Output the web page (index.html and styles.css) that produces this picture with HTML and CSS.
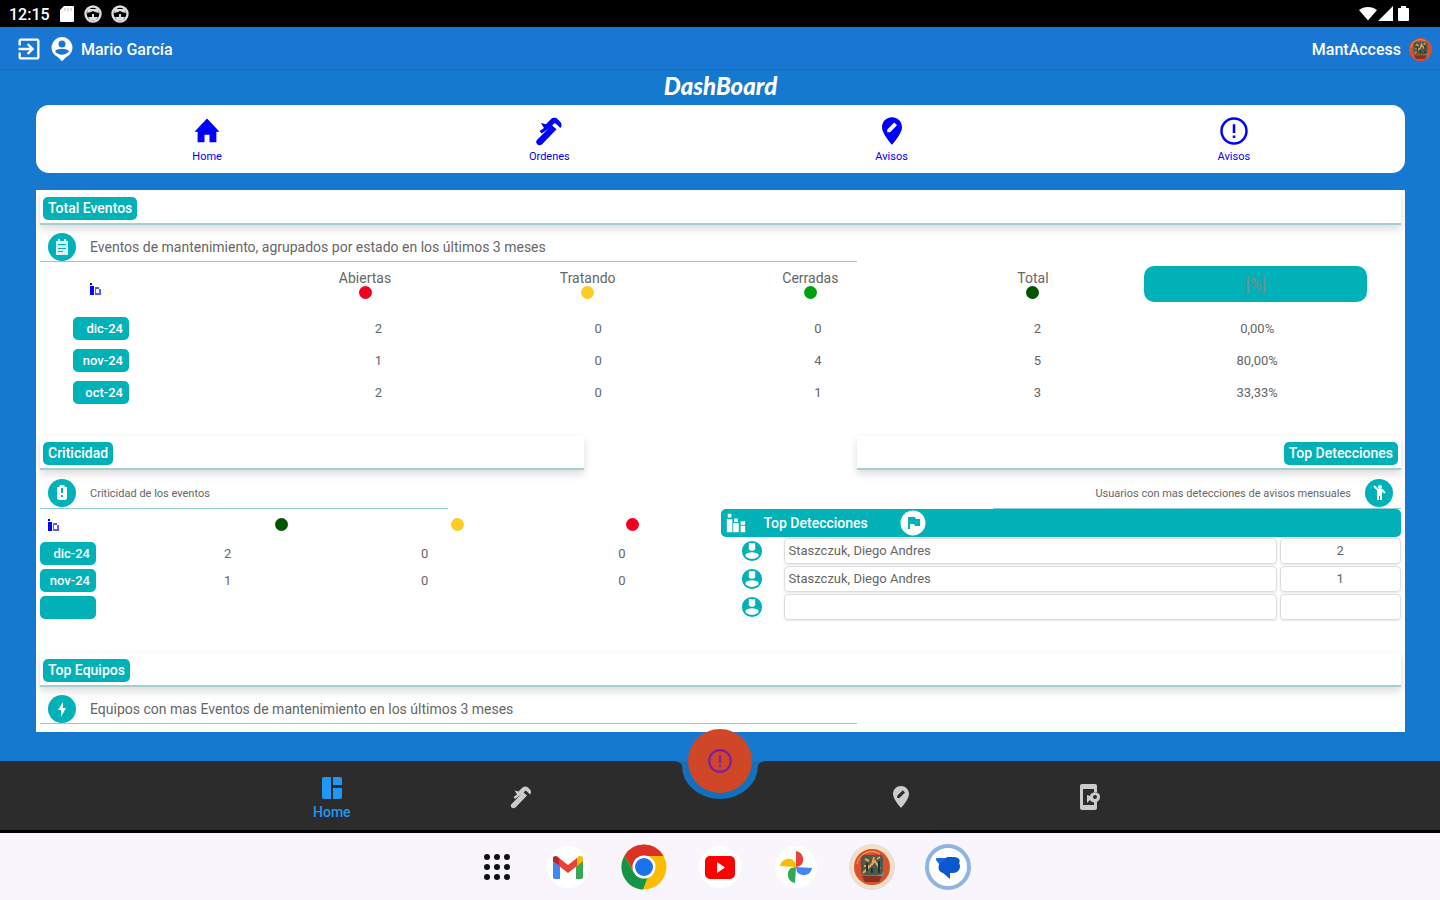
FILE: index.html
```html
<!DOCTYPE html>
<html lang="es">
<head>
<meta charset="utf-8">
<meta name="viewport" content="width=device-width, initial-scale=1">
<title>DashBoard</title>
<link rel="stylesheet" href="styles.css">
</head>
<body>
<svg class="defs" aria-hidden="true">
  <symbol id="tool" viewBox="0 0 24 24"><path d="M2.500 19 12 9.500 9.500 11.500 6 14l-1.500-2L8 9.500 5.500 5.500l4 1L13.500 2.500c1.600-1.500 4-1.500 5.500 0l1.800 1.800c1.500 1.500 1.700 3.800.2 5.200L18.500 7 16.500 5.500 14.500 7.500 18 10.500 6.500 22.500c-1.200 1.100-2.900 1.100-4 0-1-1-1-2.500 0-3.500z"/></symbol>
  <symbol id="pin" viewBox="0 0 24 24"><path fill-rule="evenodd" d="M12 1c-4.400 0-8 3.400-8 8 0 5.300 8 14 8 14s8-8.700 8-14c0-4.600-3.600-8-8-8zM8.200 13v-2.200l5.600-5.600 2.200 2.200-5.600 5.600z"/></symbol>
  <symbol id="alert" viewBox="0 0 24 24"><circle cx="12" cy="12" r="10" fill="none" stroke="currentColor" stroke-width="2"/><path d="M11 6.500h2v7h-2zM11 15.500h2v2h-2z"/></symbol>
  <symbol id="bars" viewBox="0 0 24 24"><path d="M2 8h6v14H2zM3 2h4v4H3zM9 12h6v10H9zM10 7h4v4h-4zM17 15h5v7h-5zM17 10h5v4h-5z"/></symbol>
  <symbol id="mini" viewBox="0 0 14 14"><path d="M1 4h4v9H1zM1 1h2v2H1z"/><path opacity=".65" d="M6 5h4v2H6zM6 7h1v6H6zM7 11h3v2H7zM10 7h2v6h-2z"/></symbol>
  <symbol id="user" viewBox="0 0 24 24"><path fill-rule="evenodd" d="M12 1a11 11 0 1 0 0 22 11 11 0 0 0 0-22zM8.500 3.500h7v6.500c-2 2.200-5 2.200-7 0zM5 18v-2.500c3-3 11-3 14 0V18c-4 3.500-10 3.500-14 0z"/></symbol>
  <symbol id="ball" viewBox="0 0 18 18"><circle cx="9" cy="9" r="7.500" fill="none" stroke="#ddd" stroke-width="2.400"/><path fill="#ddd" d="M4 4h10l1 4-4-1-2-1-2 1-4 1zM8 9h2v3H8zM4 12h10l-2 3H6z"/></symbol>
  <symbol id="logo" viewBox="0 0 36 36"><circle cx="18" cy="18" r="18" fill="#d9512c"/><path fill="#57a6c4" d="M30 24a14 14 0 0 1-6 7l-1-4 4-6z"/><rect x="7" y="6" width="22" height="20" rx="4" fill="#4b5a4b"/><path fill="#8b2f20" d="M8 27h20l-3 6H11z"/><path fill="none" stroke="#e6a35a" stroke-width="2" d="M9 24 21 12l5 8M11 10l4 2M20 8l-2 8M10 17h5M23 10l3-2"/><path fill="none" stroke="#20352f" stroke-width="2" d="M13 14v8M18 19v5M25 12v12"/><path fill="none" stroke="#f1b465" d="M3 15A15 15 0 0 1 26 5"/></symbol>
</svg>

<div class="status">
  <div class="status-side">
    <span>12:15</span>
    <svg width="16" height="18" viewBox="0 0 16 18"><path fill="#fff" d="M5 1h9a1 1 0 0 1 1 1v14a1 1 0 0 1-1 1H2a1 1 0 0 1-1-1V5z"/><path stroke="#bbb" d="M6 3v3M9 3v3M12 3v3"/></svg>
    <svg width="18" height="18"><use href="#ball"/></svg>
    <svg width="18" height="18"><use href="#ball"/></svg>
  </div>
  <svg width="52" height="18" viewBox="0 0 52 18" fill="#fff" aria-hidden="true"><path d="M0 5C5 1 13 1 18 5l-9 10.500zM19 16 34 1v15zM40 3h2V1h5v2h2a1 1 0 0 1 1 1v11a1 1 0 0 1-1 1h-9a1 1 0 0 1-1-1V4a1 1 0 0 1 1-1z"/></svg>
</div>

<header class="appbar">
  <div class="appbar-side">
    <button class="plain" aria-label="Salir"><svg width="28" height="28" viewBox="0 0 24 24"><path d="M10.090 15.590 11.500 17l5-5-5-5-1.410 1.410L12.670 11H3v2h9.670zM19 3H5c-1.110 0-2 .9-2 2v4h2V5h14v14H5v-4H3v4c0 1.100.89 2 2 2h14c1.100 0 2-.9 2-2V5c0-1.100-.9-2-2-2z"/></svg></button>
    <svg width="22" height="26" viewBox="0 0 22 26"><path fill-rule="evenodd" d="M11 1a10.500 10.500 0 0 0-4 20.200l4 4 4-4A10.500 10.500 0 0 0 11 1zm0 3.500a3.500 3.500 0 1 1 0 7 3.500 3.500 0 0 1 0-7zM4 15c3-3 11-3 14 0-3 5-11 5-14 0z"/></svg>
    <span>Mario García</span>
  </div>
  <div class="appbar-side brand"><span>MantAccess</span><svg width="23" height="23"><use href="#logo"/></svg></div>
</header>

<main class="main">
  <h1 class="title">DashBoard</h1>
  <nav class="quick">
    <a href="#"><svg viewBox="0 0 24 24"><path d="M10 21v-6h4v6h5.500v-8.500H22L12 2 2 12.500h2.500V21z"/></svg>Home</a>
    <a href="#"><svg><use href="#tool"/></svg>Ordenes</a>
    <a href="#"><svg><use href="#pin"/></svg>Avisos</a>
    <a href="#"><svg><use href="#alert"/></svg>Avisos</a>
  </nav>

  <div class="panel">
    <section class="block">
      <h2 class="strip"><span class="tag">Total Eventos</span></h2>
      <div class="sub wide">
        <svg class="round" viewBox="0 0 28 28"><circle cx="14" cy="14" r="14"/><path fill="#d8f3f3" d="M8 8h2V6h2v2h4V6h2v2h2v14H8z"/><path stroke="#00b2b8" d="M10 11.500h8M10 15.500h8M10 18.500h5"/></svg>
        <p>Eventos de mantenimiento, agrupados por estado en los últimos 3 meses</p>
      </div>
      <table class="events">
        <thead><tr>
          <th class="lead" aria-label="Mes"><svg class="mini"><use href="#mini"/></svg></th>
          <th>Abiertas<i class="dot red"></i></th>
          <th>Tratando<i class="dot yellow"></i></th>
          <th>Cerradas<i class="dot green"></i></th>
          <th>Total<i class="dot dark"></i></th>
          <th><button class="percent">[%]</button></th>
        </tr></thead>
        <tbody>
          <tr><th><span class="month">dic-24</span></th><td>2</td><td>0</td><td>0</td><td>2</td><td>0,00%</td></tr>
          <tr><th><span class="month">nov-24</span></th><td>1</td><td>0</td><td>4</td><td>5</td><td>80,00%</td></tr>
          <tr><th><span class="month">oct-24</span></th><td>2</td><td>0</td><td>1</td><td>3</td><td>33,33%</td></tr>
        </tbody>
      </table>
    </section>

    <div class="pair">
      <section>
        <h2 class="strip short"><span class="tag">Criticidad</span></h2>
        <div class="sub small">
          <svg class="round" viewBox="0 0 28 28"><circle cx="14" cy="14" r="14"/><path fill="#fff" d="M9 8h2l1-2h4l1 2h2v12l-2 1h-6l-2-1z"/><path stroke="#00b2b8" stroke-width="2" d="M14 9v5M14 16v2"/></svg>
          <p>Criticidad de los eventos</p>
        </div>
        <table class="critical">
          <thead><tr>
            <th class="lead" aria-label="Mes"><svg class="mini"><use href="#mini"/></svg></th>
            <th aria-label="Baja"><i class="dot dark"></i></th>
            <th aria-label="Media"><i class="dot yellow"></i></th>
            <th aria-label="Alta"><i class="dot red"></i></th>
          </tr></thead>
          <tbody>
            <tr><th><span class="month">dic-24</span></th><td>2</td><td>0</td><td>0</td></tr>
            <tr><th><span class="month">nov-24</span></th><td>1</td><td>0</td><td>0</td></tr>
            <tr><th><span class="month"></span></th><td></td><td></td><td></td></tr>
          </tbody>
        </table>
      </section>

      <section>
        <h2 class="strip short right"><span class="tag">Top Detecciones</span></h2>
        <div class="sub small right">
          <p>Usuarios con mas detecciones de avisos mensuales</p>
          <svg class="round" viewBox="0 0 28 28"><circle cx="14" cy="14" r="14"/><path fill="none" stroke="#fff" stroke-width="2" d="m9 7 4 4h4l3 3"/><circle cx="15" cy="8" r="2" fill="#fff"/><path fill="#fff" d="M12 10h5v11h-2v-4h-1v4h-2z"/></svg>
        </div>
        <div class="bar">
          <svg width="24" height="22"><use href="#bars"/></svg>
          <span>Top Detecciones</span>
          <svg width="26" height="26" viewBox="0 0 26 26"><circle cx="13" cy="13" r="12.500"/><path fill="#00b2b8" d="M8 7h7l1 2h4v7h-5l-1-2h-4v5H8z"/></svg>
        </div>
        <ul class="people">
          <li><svg><use href="#user"/></svg><span class="name">Staszczuk, Diego Andres</span><span class="count">2</span></li>
          <li><svg><use href="#user"/></svg><span class="name">Staszczuk, Diego Andres</span><span class="count">1</span></li>
          <li><svg><use href="#user"/></svg><span class="name"></span><span class="count"></span></li>
        </ul>
      </section>
    </div>

    <section class="block">
      <h2 class="strip"><span class="tag">Top Equipos</span></h2>
      <div class="sub wide">
        <svg class="round" viewBox="0 0 28 28"><circle cx="14" cy="14" r="14"/><path fill="#fff" d="m15 7-5 8h3v7l5-9h-3z"/></svg>
        <p>Equipos con mas Eventos de mantenimiento en los últimos 3 meses</p>
      </div>
    </section>
  </div>
</main>

<nav class="tabs">
  <a class="active" href="#"><svg viewBox="0 0 24 24"><path d="M4 1h7v22H4a2 2 0 0 1-2-2V3a2 2 0 0 1 2-2zM13 1h7a2 2 0 0 1 2 2v6h-9zM13 12h9v9a2 2 0 0 1-2 2h-7z"/></svg>Home</a>
  <a href="#" aria-label="Ordenes"><svg><use href="#tool"/></svg></a>
  <span></span>
  <a href="#" aria-label="Avisos"><svg><use href="#pin"/></svg></a>
  <a href="#" aria-label="Dispositivo"><svg class="device" viewBox="0 0 24 28"><path fill-rule="evenodd" d="M4 1h13a2 2 0 0 1 2 2v6h-3V6H5v16h11v-3h3v6a2 2 0 0 1-2 2H4a2 2 0 0 1-2-2V3a2 2 0 0 1 2-2z"/><path fill-rule="evenodd" d="M12 13c1-5 10-5 10 1s-8 7-10 3l-3 3v-8zm5-1a2 2 0 1 0 0 4 2 2 0 0 0 0-4z"/></svg></a>
  <svg class="notch" viewBox="0 0 96 40"><path d="M0 0h96q-9 0-10 5a38 33 0 0 1-76 0Q9 0 0 0z"/></svg>
  <button class="fab" aria-label="Nuevo aviso"><svg><use href="#alert"/></svg></button>
</nav>

<footer class="dock">
  <button class="plain" aria-label="Aplicaciones"><svg viewBox="-5 0 46 46"><g fill="#111"><circle cx="13" cy="13" r="3"/><circle cx="23" cy="13" r="3"/><circle cx="33" cy="13" r="3"/><circle cx="13" cy="23" r="3"/><circle cx="23" cy="23" r="3"/><circle cx="33" cy="23" r="3"/><circle cx="13" cy="33" r="3"/><circle cx="23" cy="33" r="3"/><circle cx="33" cy="33" r="3"/></g></svg></button>
  <button class="plain" aria-label="Gmail"><svg viewBox="0 0 46 46"><circle cx="23" cy="23" r="21" fill="#fff"/><path fill="#4285f4" d="M8 16l7 5v14h-5a2 2 0 0 1-2-2z"/><path fill="#34a853" d="M31 21l7-5v17a2 2 0 0 1-2 2h-5z"/><path fill="#fbbc04" d="M31 15l3-3c2-1 4 0 4 3v2l-7 6z"/><path fill="#c5221f" d="M8 17v-3c0-2 3-3 5-1l2 2v7z"/><path fill="#ea4335" d="m14 14 9 7 9-7v8l-9 7-9-7z"/></svg></button>
  <button class="plain" aria-label="Chrome"><svg viewBox="0 0 46 46"><circle cx="23" cy="23" r="22.500" fill="#fbbc05"/><path fill="#db3226" d="M3.500 11.800A22.500 22.500 0 0 1 42.500 12H23L13 28z"/><path fill="#159447" d="M3.500 11.800 13 29l10 4 4-.5-5 13A22.500 22.500 0 0 1 3.500 11.800z"/><circle cx="23" cy="23" r="11.500" fill="#fff"/><circle cx="23" cy="23" r="9" fill="#1a73e8"/></svg></button>
  <button class="plain" aria-label="YouTube"><svg viewBox="0 0 46 46"><circle cx="23" cy="23" r="21" fill="#fff"/><rect x="8" y="12" width="30" height="23" rx="5" fill="#f00"/><path fill="#fff" d="m20 18 8 5.500-8 5.500z"/></svg></button>
  <button class="plain" aria-label="Fotos"><svg viewBox="0 0 46 46"><circle cx="23" cy="23" r="21" fill="#fff"/><path fill="#ea4335" d="M23 7a8.500 8.500 0 0 1 4 15l-4 1z"/><path fill="#fbbc04" d="M7 22a8.500 8.500 0 0 1 15-4l1 5z"/><path fill="#34a853" d="M22 39a8.500 8.500 0 0 1-4-15l5-1z"/><path fill="#4285f4" d="M39 24a8.500 8.500 0 0 1-15 4l-1-5z"/></svg></button>
  <button class="plain" aria-label="MantAccess"><svg viewBox="0 0 46 46"><circle cx="23" cy="23" r="22.500" fill="#f5dfc5" stroke="#ddd"/><use href="#logo" x="5" y="5" width="36" height="36"/></svg></button>
  <button class="plain" aria-label="Mensajes"><svg viewBox="0 0 46 46"><circle cx="23" cy="23" r="21" fill="#fff" stroke="#8fb4e3" stroke-width="4"/><path fill="#1967e0" d="M12 14h14v13H20c-5 0-7-4-6-7l-3-4c0-1 0-2 1-2z"/><path fill="#0b57d0" d="M22 13h7c5 0 7 4 5 6 3 5-1 10-6 10h-3v6l-7-6c-4-1-6-5-3-9z"/></svg></button>
</footer>
</body>
</html>
```
FILE: styles.css
```css
* { box-sizing: border-box; }
body {
  margin: 0;
  height: 100vh;
  display: flex;
  flex-direction: column;
  font-family: Roboto, "Liberation Sans", sans-serif;
  font-size: 13px;
  color: #666;
  background: #1579cf;
}
svg { display: block; flex: none; fill: currentColor; }
a { color: inherit; text-decoration: none; }
h1, h2, p, ul { margin: 0; padding: 0; }
.defs { position: absolute; width: 0; height: 0; }
.plain { padding: 0; border: 0; background: none; color: inherit; }

.status {
  flex: none;
  height: 27px;
  display: flex;
  align-items: center;
  justify-content: space-between;
  padding: 1px 29px 0 9px;
  background: #000;
  color: #fff;
  font-size: 16px;
  font-weight: 500;
}
.status-side { display: flex; align-items: center; gap: 9px; }

.appbar {
  flex: none;
  height: 42px;
  display: flex;
  align-items: center;
  justify-content: space-between;
  padding: 2px 8px 0 15px;
  background: #1976d2;
  box-shadow: 0 1px 2px #176fae;
  color: #fff;
  font-size: 16px;
  font-weight: 500;
}
.appbar-side { display: flex; align-items: center; gap: 8px; }

.main {
  flex: 1;
  min-height: 0;
  display: flex;
  flex-direction: column;
  padding: 0 35px 29px 36px;
}
.title {
  flex: none;
  height: 36px;
  text-align: center;
  color: #fff;
  font: italic 900 24px/34px Lato, sans-serif;
}
.quick {
  flex: none;
  display: grid;
  grid-template-columns: repeat(4, 1fr);
  height: 68px;
  margin-bottom: 17px;
  border-radius: 13px;
  background: #fff;
  color: #00f;
  font-size: 11px;
}
.quick a {
  display: flex;
  flex-direction: column;
  align-items: center;
  padding-top: 11px;
  gap: 4px;
  line-height: 14px;
}
.quick svg { width: 30px; height: 30px; }
.panel {
  flex: 1;
  min-height: 0;
  overflow: hidden;
  padding: 1px 4px;
  background: #fff;
}

.strip {
  height: 34px;
  display: flex;
  align-items: center;
  padding: 2px 3px 0;
  border-bottom: 2px solid #a3cfd1;
  box-shadow: 0 4px 8px rgba(0, 0, 0, .14);
  font-size: 14px;
}
.strip.short { width: 80%; }
.strip.right { margin-left: auto; justify-content: flex-end; }
.tag {
  height: 23px;
  padding: 0 5px;
  border-radius: 5px;
  background: #00b2b8;
  color: #fff;
  font-weight: 500;
  line-height: 23px;
}
.sub {
  position: relative;
  display: flex;
  align-items: center;
  gap: 14px;
  height: 37px;
  padding: 8px 8px 0;
  border-bottom: 1px solid #8fcdd4;
  font-size: 14px;
}
.sub.wide { width: 60%; }
.sub.small { width: 60%; height: 39px; font-size: 11px; }
.sub.right { margin-left: auto; justify-content: flex-end; white-space: nowrap; }
.round { width: 28px; height: 28px; color: #00b2b8; }

table { display: block; width: 100%; }
thead, tbody { display: block; }
tr { display: grid; align-items: center; }
th, td { display: block; padding: 0; text-align: center; font-weight: 400; }
.mini { width: 14px; height: 14px; color: #00f; }
.dot { display: block; width: 13px; height: 13px; margin: 0 auto; border-radius: 50%; }
.red { background: #f20020; }
.yellow { background: #fecb22; }
.green { background: #00a010; }
.dark { background: #005600; }
.month {
  display: block;
  width: 56px;
  height: 23px;
  padding-right: 6px;
  border-radius: 5px;
  background: #00b2b8;
  color: #fff;
  font-weight: 500;
  line-height: 23px;
  text-align: right;
}

.events { padding-right: 34px; margin-bottom: 28px; }
.events thead tr { height: 50px; grid-template-columns: 214fr repeat(5, 223fr); padding-bottom: 6px; }
.events thead th { line-height: 16px; font-size: 14px; }
.events .lead { padding: 10px 0 0 49px; }
.events tbody tr { height: 32px; grid-template-columns: 229fr repeat(5, 220fr); }
.events .month { margin-left: 33px; }
.percent {
  width: 100%;
  height: 36px;
  border: 0;
  border-radius: 10px;
  background: #00b2b8;
  color: #6d8e8b;
  font: 500 16px Roboto, sans-serif;
}

.pair { display: grid; grid-template-columns: 1fr 1fr; height: 217px; }
.critical thead tr { height: 31px; grid-template-columns: 154fr repeat(3, 176fr); }
.critical .lead { padding-left: 7px; }
.critical tbody tr { height: 27px; grid-template-columns: 89fr repeat(3, 197fr); }

.bar {
  display: flex;
  align-items: center;
  height: 28px;
  padding: 0 3px;
  border-radius: 5px;
  background: #00b2b8;
  color: #fff;
  font-size: 14px;
  font-weight: 500;
}
.bar span { width: 136px; margin-left: 16px; }
.people { list-style: none; }
.people li {
  display: grid;
  grid-template-columns: 63px 494fr 121fr;
  align-items: center;
  height: 28px;
}
.people svg { width: 22px; height: 22px; margin: 0 20px; color: #00b2b8; }
.name, .count {
  height: 26px;
  border: 1px solid #ddd;
  border-radius: 4px;
  box-shadow: 0 1px 2px #e4e4e4;
  line-height: 24px;
}
.name { padding-left: 4px; margin-right: 3px; }
.count { text-align: center; }

.tabs {
  position: relative;
  flex: none;
  display: grid;
  grid-template-columns: repeat(5, 1fr);
  align-items: center;
  height: 72px;
  padding: 2px 255px 0 237px;
  background: #2c2c2c;
  border-bottom: 3px solid #000;
  color: #ccc;
}
.tabs a { display: flex; flex-direction: column; align-items: center; gap: 4px; }
.tabs a svg { width: 24px; height: 24px; }
.tabs a .device { height: 28px; }
.tabs .active { padding-top: 2px; color: #2196f3; font-size: 14px; font-weight: 500; }
.notch {
  position: absolute;
  top: 0;
  left: 50%;
  width: 96px;
  height: 40px;
  margin-left: -48px;
  color: #1270bd;
}
.fab {
  position: absolute;
  top: -32px;
  left: 50%;
  width: 64px;
  height: 64px;
  margin-left: -32px;
  padding: 0;
  display: grid;
  place-items: center;
  border: 0;
  border-radius: 50%;
  background: #cf4727;
  color: #7a1fa2;
}
.fab svg { width: 26px; height: 26px; }

.dock {
  flex: none;
  display: flex;
  align-items: center;
  justify-content: center;
  gap: 30px;
  height: 67px;
  background: #f8f6fc;
}
.dock svg { width: 46px; height: 46px; }
```
